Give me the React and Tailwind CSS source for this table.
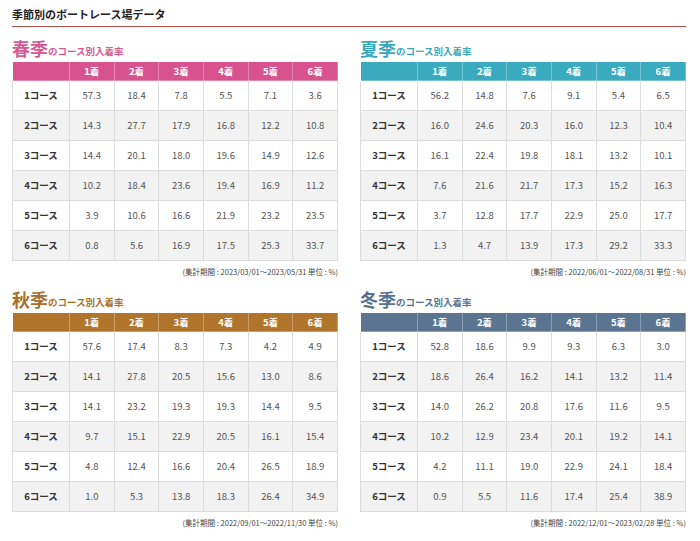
const seasons = [
  {
    name: "春季",
    period: "2023/03/01～2023/05/31",
    text: "text-[#d65a92]",
    head: "bg-[#d8538e]",
    rows: [
      ["57.3", "18.4", "7.8", "5.5", "7.1", "3.6"],
      ["14.3", "27.7", "17.9", "16.8", "12.2", "10.8"],
      ["14.4", "20.1", "18.0", "19.6", "14.9", "12.6"],
      ["10.2", "18.4", "23.6", "19.4", "16.9", "11.2"],
      ["3.9", "10.6", "16.6", "21.9", "23.2", "23.5"],
      ["0.8", "5.6", "16.9", "17.5", "25.3", "33.7"],
    ],
  },
  {
    name: "夏季",
    period: "2022/06/01～2022/08/31",
    text: "text-[#3aa9bd]",
    head: "bg-[#3aabbe]",
    rows: [
      ["56.2", "14.8", "7.6", "9.1", "5.4", "6.5"],
      ["16.0", "24.6", "20.3", "16.0", "12.3", "10.4"],
      ["16.1", "22.4", "19.8", "18.1", "13.2", "10.1"],
      ["7.6", "21.6", "21.7", "17.3", "15.2", "16.3"],
      ["3.7", "12.8", "17.7", "22.9", "25.0", "17.7"],
      ["1.3", "4.7", "13.9", "17.3", "29.2", "33.3"],
    ],
  },
  {
    name: "秋季",
    period: "2022/09/01～2022/11/30",
    text: "text-[#a86f2a]",
    head: "bg-[#b0742b]",
    rows: [
      ["57.6", "17.4", "8.3", "7.3", "4.2", "4.9"],
      ["14.1", "27.8", "20.5", "15.6", "13.0", "8.6"],
      ["14.1", "23.2", "19.3", "19.3", "14.4", "9.5"],
      ["9.7", "15.1", "22.9", "20.5", "16.1", "15.4"],
      ["4.8", "12.4", "16.6", "20.4", "26.5", "18.9"],
      ["1.0", "5.3", "13.8", "18.3", "26.4", "34.9"],
    ],
  },
  {
    name: "冬季",
    period: "2022/12/01～2023/02/28",
    text: "text-[#587290]",
    head: "bg-[#5b7590]",
    rows: [
      ["52.8", "18.6", "9.9", "9.3", "6.3", "3.0"],
      ["18.6", "26.4", "16.2", "14.1", "13.2", "11.4"],
      ["14.0", "26.2", "20.8", "17.6", "11.6", "9.5"],
      ["10.2", "12.9", "23.4", "20.1", "19.2", "14.1"],
      ["4.2", "11.1", "19.0", "22.9", "24.1", "18.4"],
      ["0.9", "5.5", "11.6", "17.4", "25.4", "38.9"],
    ],
  },
];

const places = ["1着", "2着", "3着", "4着", "5着", "6着"];

function SeasonTable({ season }) {
  return (
    <section className="w-[326px]">
      <h3 className={`h-[22px] flex items-end font-bold leading-none ${season.text}`}>
        <span className="text-[18px] pb-[4px]">{season.name}</span>
        <span className="text-[9.5px] pb-[5px]">のコース別入着率</span>
      </h3>
      <table className="w-full border-collapse table-fixed">
        <colgroup>
          <col className="w-[57px]" />
          {places.map((p) => (
            <col key={p} />
          ))}
        </colgroup>
        <thead>
          <tr className={season.head}>
            <th className="h-[19px] border border-white/30"></th>
            {places.map((p) => (
              <th key={p} className="h-[19px] border border-white/30 text-[9.5px] font-bold text-white">
                {p}
              </th>
            ))}
          </tr>
        </thead>
        <tbody>
          {season.rows.map((row, i) => (
            <tr key={i} className={i % 2 === 1 ? "bg-[#f2f2f2]" : "bg-white"}>
              <td className="h-[30px] border border-[#dcdcdc] text-center text-[9.5px] font-bold text-[#333]">
                {i + 1}コース
              </td>
              {row.map((v, j) => (
                <td key={j} className="h-[30px] border border-[#dcdcdc] text-center text-[9.5px] text-[#555]">
                  {v}
                </td>
              ))}
            </tr>
          ))}
        </tbody>
      </table>
      <p className="mt-[5px] h-[12px] text-right text-[7.5px] leading-[12px] text-[#444]">
        (集計期間 : {season.period} 単位 : %)
      </p>
    </section>
  );
}

export default function App() {
  return (
    <div
      className="w-[700px] min-h-[541px] bg-white pl-[12px] pr-[14px] pt-[6px]"
      style={{ fontFamily: '"Noto Sans CJK JP", "Noto Sans", sans-serif' }}
    >
      <h2 className="h-[21px] border-b border-[#b5504e] text-[11px] font-bold leading-[16px] text-[#222]">
        季節別のボートレース場データ
      </h2>
      <div className="grid grid-cols-2 gap-x-[22px] gap-y-[12px] pt-[12px]">
        {seasons.map((s) => (
          <SeasonTable key={s.name} season={s} />
        ))}
      </div>
    </div>
  );
}
